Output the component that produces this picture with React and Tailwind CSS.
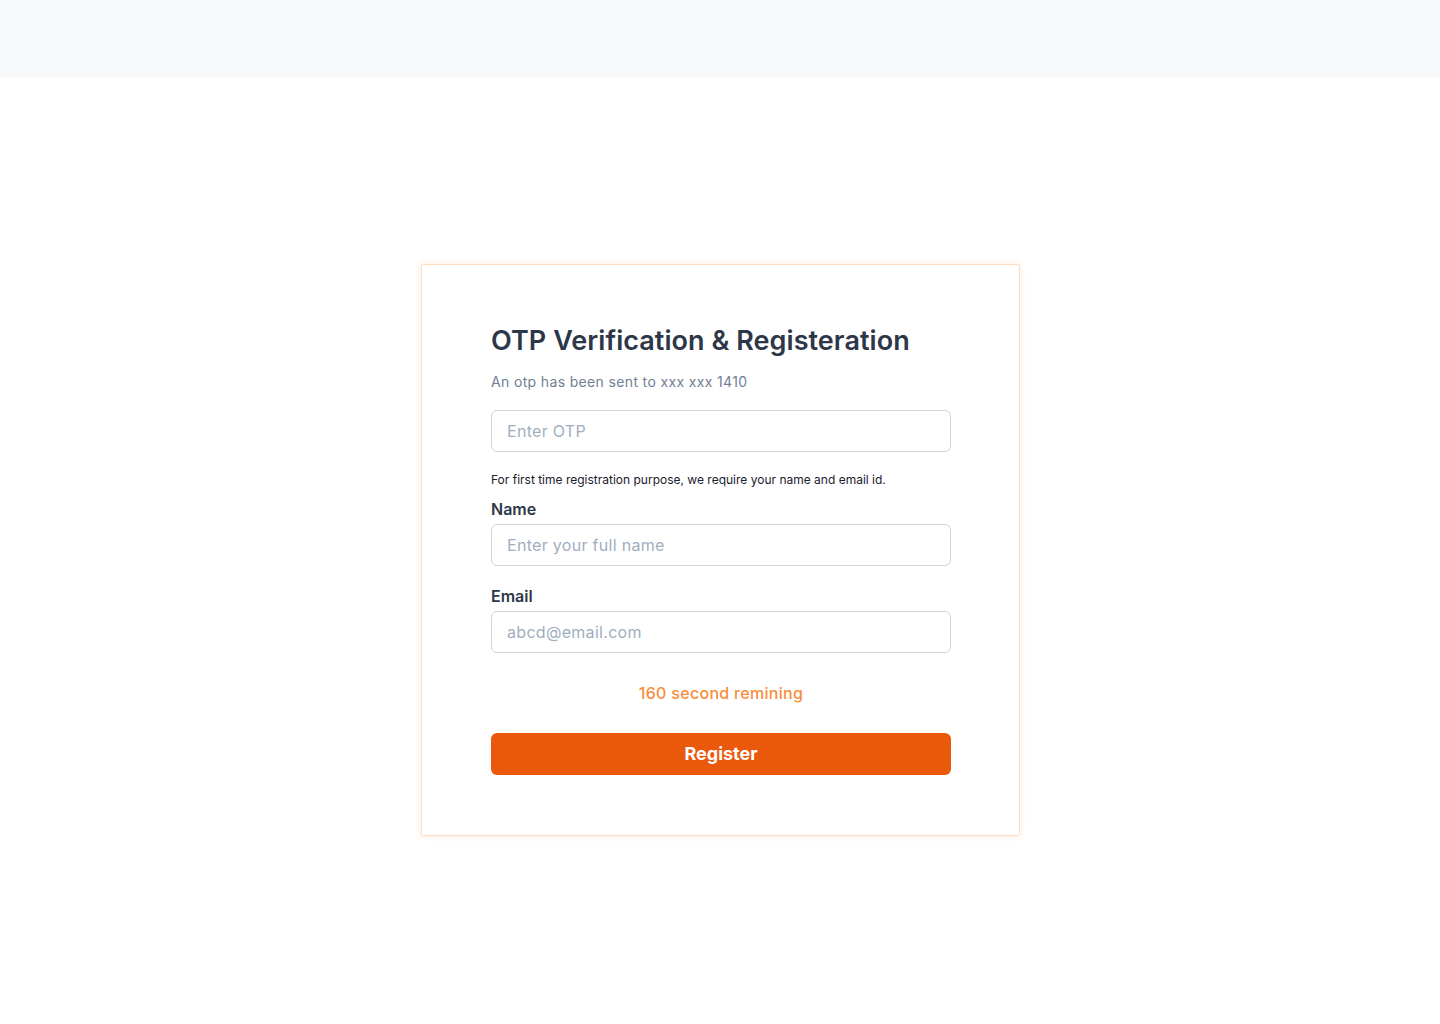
export default function App() {
  return (
    <div className="min-h-screen bg-white flex flex-col" style={{ fontFamily: 'Inter, "Noto Sans", sans-serif' }}>
      <header className="h-[75px] bg-[#f5f9fc] shadow-[0_1px_3px_rgba(0,0,0,0.05)] shrink-0" />
      <main className="flex-1 flex items-center justify-center">
        <div className="ml-[1px] w-[599px] border border-[#fedfc4] bg-white shadow-[0_0_6px_rgba(251,146,60,0.2)] pl-[69px] pr-[68px] pt-[60px] pb-[60px] rounded-[2px]">
          <h1 className="text-[27px] leading-[32px] font-semibold text-[#2d3748] tracking-[0.05px]">
            OTP Verification &amp; Registeration
          </h1>
          <p className="mt-[15px] text-[14px] leading-[20px] text-[#718096] tracking-[0.35px]">
            An otp has been sent to xxx xxx 1410
          </p>
          <input
            className="mt-[18px] w-full h-[42px] rounded-md border border-[#cbd5e0] px-[15px] text-[16px] text-[#2d3748] placeholder-[#a0aec0] outline-none tracking-[0.3px]"
            placeholder="Enter OTP"
          />
          <p className="mt-[20px] text-[12px] leading-[16px] text-[#1a202c]">
            For first time registration purpose, we require your name and email id.
          </p>
          <label className="block mt-[9px] text-[16px] leading-[24px] font-semibold text-[#2d3748]">Name</label>
          <input
            className="mt-[3px] w-full h-[42px] rounded-md border border-[#cbd5e0] px-[15px] text-[16px] text-[#2d3748] placeholder-[#a0aec0] outline-none tracking-[0.3px]"
            placeholder="Enter your full name"
          />
          <label className="block mt-[18px] text-[16px] leading-[24px] font-semibold text-[#2d3748]">Email</label>
          <input
            className="mt-[3px] w-full h-[42px] rounded-md border border-[#cbd5e0] px-[15px] text-[16px] text-[#2d3748] placeholder-[#a0aec0] outline-none tracking-[0.3px]"
            placeholder="abcd@email.com"
          />
          <p className="mt-[28px] text-center text-[16px] leading-[24px] font-medium text-[#fb8c3c] tracking-[0.3px]">
            160 second remining
          </p>
          <button className="mt-[28px] w-full h-[42px] rounded-md bg-[#ea580c] text-white text-[18px] font-bold">
            Register
          </button>
        </div>
      </main>
    </div>
  );
}
